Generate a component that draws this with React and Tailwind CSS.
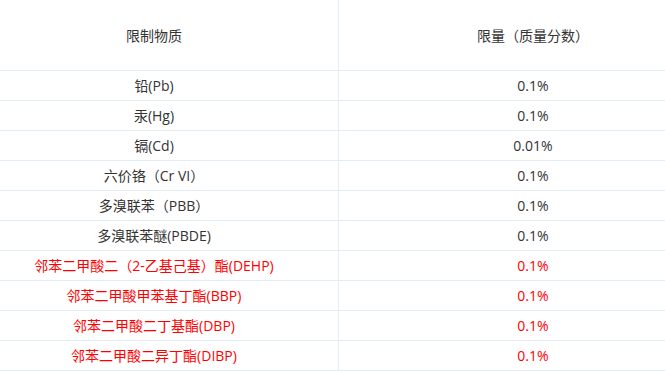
import React from "react";

const rows = [
  ["铅(Pb)", "0.1%", false],
  ["汞(Hg)", "0.1%", false],
  ["镉(Cd)", "0.01%", false],
  ["六价铬（Cr VI）", "0.1%", false],
  ["多溴联苯（PBB）", "0.1%", false],
  ["多溴联苯醚(PBDE)", "0.1%", false],
  ["邻苯二甲酸二（2-乙基己基）酯(DEHP)", "0.1%", true],
  ["邻苯二甲酸甲苯基丁酯(BBP)", "0.1%", true],
  ["邻苯二甲酸二丁基酯(DBP)", "0.1%", true],
  ["邻苯二甲酸二异丁酯(DIBP)", "0.1%", true],
];

export default function App() {
  return (
    <div
      className="w-[665px] h-[373px] overflow-hidden bg-white text-[14px] text-[#333333]"
      style={{ fontFamily: '"Open Sans", "Noto Sans CJK SC", sans-serif' }}
    >
      <div className="-ml-[30px] w-[757px]">
        <div className="flex h-[71px] border-b border-[#e3edf6]">
          <div className="w-[369px] border-r border-[#e3edf6] flex items-center justify-center">
            限制物质
          </div>
          <div className="w-[388px] flex items-center justify-center">
            限量（质量分数）
          </div>
        </div>
        {rows.map(([a, b, red], i) => (
          <div
            key={i}
            className={
              "flex h-[30px] border-b border-[#e3edf6] " +
              (red ? "text-[#ff0000]" : "")
            }
          >
            <div className="w-[369px] border-r border-[#e3edf6] flex items-center justify-center whitespace-nowrap">
              {a}
            </div>
            <div className="w-[388px] flex items-center justify-center">{b}</div>
          </div>
        ))}
      </div>
    </div>
  );
}
